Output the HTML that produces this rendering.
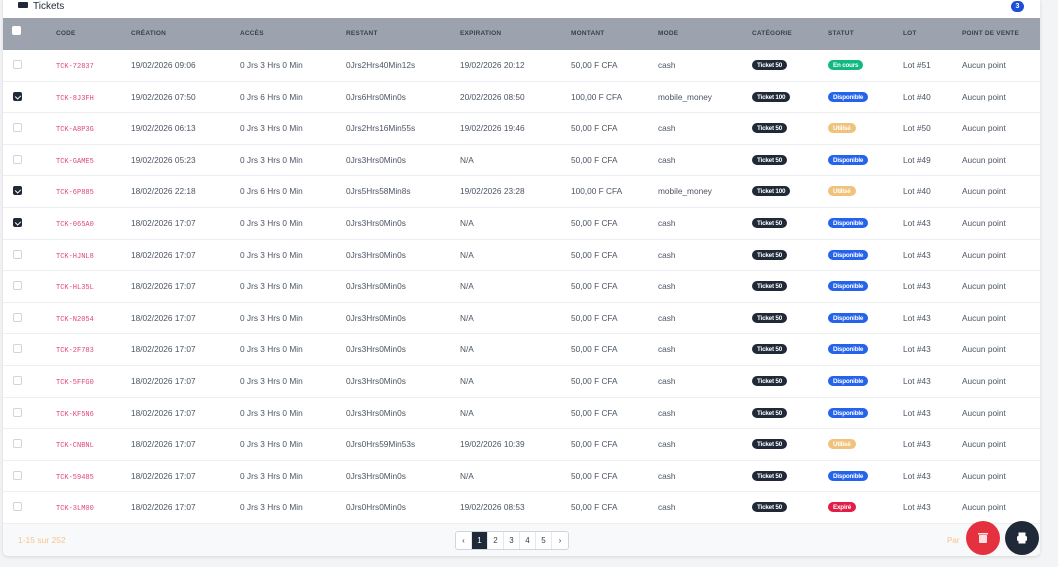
<!DOCTYPE html>
<html><head><meta charset="utf-8"><style>
*{box-sizing:border-box;margin:0;padding:0}
body{width:1058px;height:567px;overflow:hidden;background:#f3f4f6;font-family:"Liberation Sans",sans-serif;position:relative}
.card{position:absolute;left:3px;top:-4px;width:1037px;height:560px;background:#fff;border-radius:5px;box-shadow:0 1px 3px rgba(0,0,0,.12)}
.title{position:absolute;left:18px;top:0;font-size:10px;color:#1f2937;line-height:11px}
.title i{display:inline-block;width:10px;height:6px;background:#1f2937;margin-right:5px;vertical-align:1px;border-radius:1px}
.badge3{position:absolute;left:1011px;top:1px;width:13px;height:11px;border-radius:6px;background:#1d4ed8;color:#fff;font-size:7px;font-weight:bold;text-align:center;line-height:11px}
.hdr{position:absolute;left:3px;top:18px;width:1037px;height:32px;background:#9ca3af}
.c{position:absolute;white-space:nowrap}
.hdr .c{top:0;line-height:32px;font-size:6.5px;color:#374151;font-weight:bold;letter-spacing:.2px}
.row{position:absolute;left:3px;width:1037px;height:31.6px;border-bottom:1px solid #eceef1}
.row .c{top:0;line-height:30px;font-size:8.3px;color:#4b5563}
.row .code{color:#e0457b;font-family:"Liberation Mono",monospace;font-size:7px}
.cb{position:absolute;left:10px;top:10px;width:9px;height:9px;border:1px solid #d1d5db;border-radius:2px;background:#fff}
.cb.on{background:#1f2937;border-color:#1f2937}
.cb.on:after{content:"";position:absolute;left:2px;top:1px;width:3px;height:4px;border:solid #fff;border-width:0 1px 1px 0;transform:rotate(45deg)}
.pc{top:10px!important;line-height:normal!important}
.pill{display:block;font-size:6.3px;font-weight:bold;color:#fff;border-radius:5px;padding:0 5px;height:10px;line-height:11px;letter-spacing:-.2px}
.dark{background:#1f2937}.blue{background:#2563eb}.green{background:#10b981}.yel{background:#f0c27b}.red{background:#e11d48}
.foot{position:absolute;left:3px;top:524px;width:1037px;height:32px;background:#f8f9fb;border-radius:0 0 5px 5px}
.pg{position:absolute;left:455px;top:531px;height:19px;display:flex;border:1px solid #d1d5db;border-radius:3px;background:#fff;overflow:hidden}
.pg span{width:16px;text-align:center;font-size:8px;line-height:17px;color:#374151;border-right:1px solid #e5e7eb}
.pg span:last-child{border-right:0}
.pg .a{background:#1f2937;color:#fff}
.fab{position:absolute;width:34px;height:34px;border-radius:50%;top:521px}
</style></head><body>
<div class="card"></div>
<div class="title" style="top:1px"><i></i>Tickets</div>
<div class="badge3">3</div>
<div class="hdr">
<div class="cb" style="left:9px;top:8px;border-color:#fff"></div>
<div class="c" style="left:53px">CODE</div><div class="c" style="left:128px">CRÉATION</div><div class="c" style="left:237px">ACCÈS</div><div class="c" style="left:343px">RESTANT</div><div class="c" style="left:457px">EXPIRATION</div><div class="c" style="left:568px">MONTANT</div><div class="c" style="left:655px">MODE</div><div class="c" style="left:749px">CATÉGORIE</div><div class="c" style="left:825px">STATUT</div><div class="c" style="left:900px">LOT</div><div class="c" style="left:959px">POINT DE VENTE</div>
</div>
<div id="rows"></div>
<script>
var d=[
["TCK-72837","19/02/2026 09:06","0 Jrs 3 Hrs 0 Min","0Jrs2Hrs40Min12s","19/02/2026 20:12","50,00 F CFA","cash","Ticket 50","green:En cours","Lot #51",0],
["TCK-8J3FH","19/02/2026 07:50","0 Jrs 6 Hrs 0 Min","0Jrs6Hrs0Min0s","20/02/2026 08:50","100,00 F CFA","mobile_money","Ticket 100","blue:Disponible","Lot #40",1],
["TCK-A8P3G","19/02/2026 06:13","0 Jrs 3 Hrs 0 Min","0Jrs2Hrs16Min55s","19/02/2026 19:46","50,00 F CFA","cash","Ticket 50","yel:Utilisé","Lot #50",0],
["TCK-GAME5","19/02/2026 05:23","0 Jrs 3 Hrs 0 Min","0Jrs3Hrs0Min0s","N/A","50,00 F CFA","cash","Ticket 50","blue:Disponible","Lot #49",0],
["TCK-6P885","18/02/2026 22:18","0 Jrs 6 Hrs 0 Min","0Jrs5Hrs58Min8s","19/02/2026 23:28","100,00 F CFA","mobile_money","Ticket 100","yel:Utilisé","Lot #40",1],
["TCK-065A0","18/02/2026 17:07","0 Jrs 3 Hrs 0 Min","0Jrs3Hrs0Min0s","N/A","50,00 F CFA","cash","Ticket 50","blue:Disponible","Lot #43",1],
["TCK-HJNL8","18/02/2026 17:07","0 Jrs 3 Hrs 0 Min","0Jrs3Hrs0Min0s","N/A","50,00 F CFA","cash","Ticket 50","blue:Disponible","Lot #43",0],
["TCK-HL35L","18/02/2026 17:07","0 Jrs 3 Hrs 0 Min","0Jrs3Hrs0Min0s","N/A","50,00 F CFA","cash","Ticket 50","blue:Disponible","Lot #43",0],
["TCK-N2054","18/02/2026 17:07","0 Jrs 3 Hrs 0 Min","0Jrs3Hrs0Min0s","N/A","50,00 F CFA","cash","Ticket 50","blue:Disponible","Lot #43",0],
["TCK-2F783","18/02/2026 17:07","0 Jrs 3 Hrs 0 Min","0Jrs3Hrs0Min0s","N/A","50,00 F CFA","cash","Ticket 50","blue:Disponible","Lot #43",0],
["TCK-5FFG0","18/02/2026 17:07","0 Jrs 3 Hrs 0 Min","0Jrs3Hrs0Min0s","N/A","50,00 F CFA","cash","Ticket 50","blue:Disponible","Lot #43",0],
["TCK-KF5N6","18/02/2026 17:07","0 Jrs 3 Hrs 0 Min","0Jrs3Hrs0Min0s","N/A","50,00 F CFA","cash","Ticket 50","blue:Disponible","Lot #43",0],
["TCK-CNBNL","18/02/2026 17:07","0 Jrs 3 Hrs 0 Min","0Jrs0Hrs59Min53s","19/02/2026 10:39","50,00 F CFA","cash","Ticket 50","yel:Utilisé","Lot #43",0],
["TCK-59485","18/02/2026 17:07","0 Jrs 3 Hrs 0 Min","0Jrs3Hrs0Min0s","N/A","50,00 F CFA","cash","Ticket 50","blue:Disponible","Lot #43",0],
["TCK-3LM00","18/02/2026 17:07","0 Jrs 3 Hrs 0 Min","0Jrs0Hrs0Min0s","19/02/2026 08:53","50,00 F CFA","cash","Ticket 50","red:Expiré","Lot #43",0]];
var x=[53,128,237,343,457,568,655,749,825,900],h="";
d.forEach(function(r,i){var t=50+i*31.6;h+='<div class="row" style="top:'+t+'px"><div class="cb'+(r[10]?' on':'')+'"></div>';
for(var j=0;j<10;j++){var v=r[j],cl='c';if(j==0)v='<span class="code">'+v+'</span>';if(j==7){v='<span class="pill dark">'+v+'</span>';cl='c pc';}if(j==8){var p=v.split(':');v='<span class="pill '+p[0]+'">'+p[1]+'</span>';cl='c pc';}
h+='<div class="'+cl+'" style="left:'+x[j]+'px">'+v+'</div>';}
h+='<div class="c" style="left:959px">Aucun point</div></div>';});
document.getElementById('rows').innerHTML=h;
</script>
<div class="foot"></div>
<div style="position:absolute;left:18px;top:535px;font-size:8.5px;color:#f5c58f">1-15 sur 252</div>
<div style="position:absolute;left:947px;top:536px;font-size:8px;color:#f5c58f">Par</div>
<div class="pg"><span>‹</span><span class="a">1</span><span>2</span><span>3</span><span>4</span><span>5</span><span>›</span></div>
<div class="fab" style="left:966px;background:#e5313f">
<svg width="34" height="34" viewBox="0 0 34 34"><rect x="13" y="14" width="8" height="8" rx="1" fill="#fff" opacity=".85"/><rect x="12" y="12" width="10" height="1.5" fill="#fff" opacity=".85"/></svg></div>
<div class="fab" style="left:1005px;background:#1f2937">
<svg width="34" height="34" viewBox="0 0 34 34"><rect x="13.5" y="11.5" width="7" height="4" fill="#fff"/><rect x="12" y="15" width="10" height="5" rx="1.5" fill="#fff"/><rect x="13.5" y="19" width="7" height="3.5" fill="#fff"/></svg></div>
</body></html>
